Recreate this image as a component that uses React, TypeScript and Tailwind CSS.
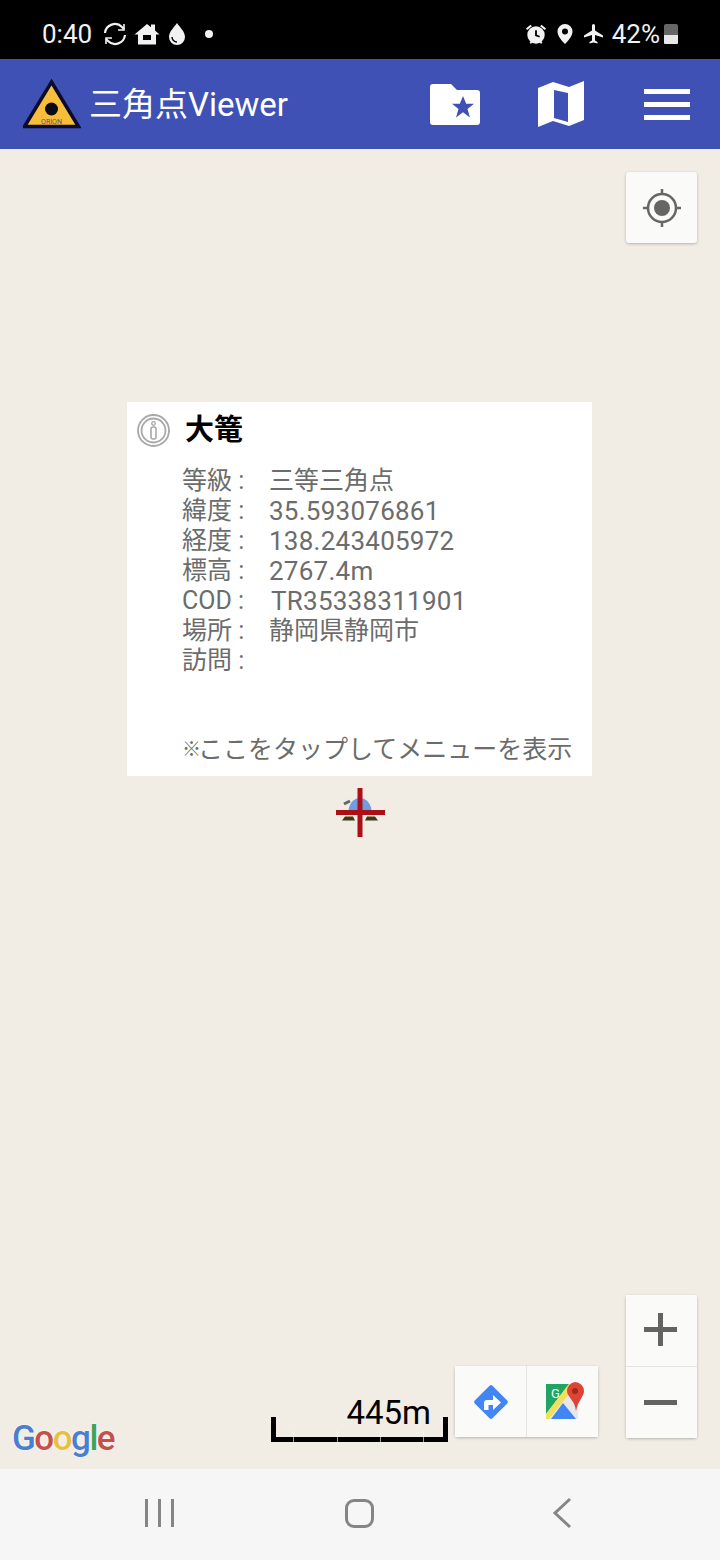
const font = { fontFamily: '"Roboto", "Noto Sans CJK JP", sans-serif' };

const rows = [
  { label: "等級", value: "三等三角点", cjk: true },
  { label: "緯度", value: "35.593076861" },
  { label: "経度", value: "138.243405972" },
  { label: "標高", value: "2767.4m" },
  { label: "COD", value: "TR35338311901", code: true },
  { label: "場所", value: "静岡県静岡市", cjk: true },
  { label: "訪問", value: "" },
];

const StatusBar = () => (
  <div className="flex h-[59px] items-center justify-between bg-black pl-[42px] pr-[42px] pt-[8px] text-[#f2f2f2]">
    <div className="flex items-center">
      <span className="text-[26px] leading-none">0:40</span>
      <svg className="ml-[11px]" width="24" height="24" viewBox="0 0 24 24" fill="none" stroke="currentColor" strokeWidth="2.2">
        <path d="M2 11a10 10 0 0 1 17-6l2 2M22 13a10 10 0 0 1-17 6l-2-2" />
        <path d="M21 2v6h-6M3 22v-6h6" strokeWidth="1.6" />
      </svg>
      <svg className="ml-[7px]" width="26" height="24" viewBox="0 0 26 24" fill="currentColor">
        <path d="M13 2l4 3.2V2.5h4v6l4.500 4H22v10H4v-10H.5zM9 13v5h8v-5z" fillRule="evenodd" />
      </svg>
      <svg className="ml-[7px]" width="20" height="24" viewBox="0 0 20 24">
        <path d="M10 1c3 4.500 8 8.500 8 14a8 8 0 0 1-16 0c0-5.500 5-9.500 8-14z" fill="currentColor" />
        <path d="M5 15a5 5 0 0 0 5 5" fill="none" stroke="#000" strokeWidth="1.500" />
      </svg>
      <span className="ml-[18px] h-[8px] w-[8px] rounded-full bg-[#f2f2f2]" />
    </div>
    <div className="flex items-center">
      <svg width="22" height="22" viewBox="0 0 24 24" fill="currentColor">
        <circle cx="12" cy="13" r="9.500" />
        <path d="M12 8v5.500l4 1.500" fill="none" stroke="#000" strokeWidth="2" />
        <path d="M1 6l5-4 1.500 1.500-5 4zM23 6l-5-4-1.500 1.500 5 4zM5 21l2-2 1.500 1.500-2 2.500zM19 21l-2-2-1.500 1.500 2 2.500z" />
      </svg>
      <svg className="ml-[8px]" width="20" height="22" viewBox="0 0 20 22">
        <path fillRule="evenodd" fill="currentColor" d="M10 1a7.500 7.500 0 0 1 7.500 7.500C17.500 13 13 18 10 21 7 18 2.500 13 2.500 8.500A7.500 7.500 0 0 1 10 1zm0 4.500a3 3 0 1 0 0 6 3 3 0 0 0 0-6z" />
      </svg>
      <svg className="ml-[7px]" width="24" height="24" viewBox="0 0 24 24" fill="currentColor">
        <path d="M21 15.500v-2l-8-5V3.500a1.500 1.500 0 0 0-3 0V8.500l-8 5v2l8-2.500v5.500l-2.500 1.500v1.500l4-1 4 1V20l-2.500-1.500V13z" />
      </svg>
      <span className="ml-[6px] text-[26px] leading-none">42%</span>
      <div className="ml-[4px] flex h-[20px] w-[14px] flex-col overflow-hidden rounded-t-[2px] rounded-b-[1px]">
        <div className="h-[11px] bg-[#666]" />
        <div className="flex-1 bg-[#e8e8e8]" />
      </div>
    </div>
  </div>
);

const Header = () => (
  <div className="flex h-[90px] items-center bg-[#3f51b5] pl-[23px] shadow-[0_1px_2px_rgba(0,0,0,0.3)]">
    <svg width="58" height="54" viewBox="0 0 58 54">
      <path d="M28.500 5 L55.500 49.500 H1.500 Z" fill="#f8bd3a" stroke="#0b0b2a" strokeWidth="3.500" strokeLinejoin="miter" />
      <circle cx="28.500" cy="32" r="6.500" fill="#0b0b16" />
      <text x="28.500" y="47" textAnchor="middle" fontSize="7" fill="#555" style={font}>ORION</text>
    </svg>
    <span className="ml-[8px] text-[33px] leading-none text-white">三角点Viewer</span>
    <div className="ml-auto flex items-center">
      <svg className="mr-[58px]" width="50" height="41" viewBox="0 0 50 41">
        <path fill="#fff" d="M3 0h18l6 6h20a3 3 0 0 1 3 3v29a3 3 0 0 1-3 3H3a3 3 0 0 1-3-3V3a3 3 0 0 1 3-3z" />
        <path fill="#3f51b5" d="M33 12l3.200 7.800H44l-6.500 5.200 2.500 8.500-7-5.200-7 5.200 2.500-8.500-6.500-5.200h7.800z" />
      </svg>
      <svg className="mr-[60px]" width="46" height="46" viewBox="0 0 46 46">
        <path fill="#fff" fillRule="evenodd" d="M0 7 15 1 31 6 46 0V39L31 45 15 40 0 46ZM16 9V37L30 41V12Z" />
      </svg>
      <div className="mr-[30px] flex w-[46px] flex-col gap-[8px]">
        <div className="h-[5px] bg-white" />
        <div className="h-[5px] bg-white" />
        <div className="h-[5px] bg-white" />
      </div>
    </div>
  </div>
);

const InfoCard = () => (
  <div className="absolute left-[127px] top-[253px] flex h-[374px] w-[465px] flex-col bg-white pl-[10px]">
    <div className="flex h-[56px] items-center">
      <svg width="33" height="33" viewBox="0 0 33 33" fill="none" stroke="#a8a8a8">
        <circle cx="16.500" cy="16.500" r="15.500" strokeWidth="1.800" />
        <circle cx="16.500" cy="16.500" r="12" strokeWidth="1.800" />
        <rect x="14" y="13" width="5" height="12" rx="2" strokeWidth="1.600" />
        <circle cx="16.500" cy="9.500" r="1.800" strokeWidth="1.300" />
      </svg>
      <span className="ml-[15px] text-[29px] font-bold leading-none text-black">大篭</span>
    </div>
    <div className="ml-[46px] mt-[8px] flex flex-col text-[25px] leading-[30px] text-[#6c6c6c]">
      {rows.map((row) => (
        <div key={row.label} className="flex h-[30px] -ml-px">
          <span className="w-[87px] whitespace-nowrap">{row.label} :</span>
          <span className={row.cjk ? "" : row.code ? "ml-[2px] text-[26px] tracking-[0.25px]" : "text-[26px] tracking-[0.25px]"}>{row.value}</span>
        </div>
      ))}
    </div>
    <div className="ml-[45px] mt-[59px] flex items-center whitespace-nowrap text-[25px] leading-[30px] text-[#6c6c6c]">
      <span className="w-[16px] text-[19px]">※</span>
      <span>ここをタップしてメニューを表示</span>
    </div>
  </div>
);

const Marker = () => (
  <svg className="absolute left-[330px] top-[635px]" width="60" height="58" viewBox="0 0 60 58">
    <path d="M14 20l6-3" stroke="#666" strokeWidth="3" fill="none" />
    <path d="M18.500 28a11.500 14 0 0 1 23 0z" fill="#6f9de0" />
    <path d="M12 36.500l3-4h8l2 4zM35 36.500l2-4h8l3 4z" fill="#3a3a14" />
    <path d="M30 4v49M6 28.500h49" stroke="#ad0f18" strokeWidth="5" />
  </svg>
);

const Control = ({ className, children }: { className?: string; children: React.ReactNode }) => (
  <div className={`flex h-[71px] w-[71px] items-center justify-center bg-[#fafaf8] ${className ?? ""}`}>{children}</div>
);

const Map = () => (
  <div className="relative flex-1 bg-[#f1ede5]">
    <Control className="absolute left-[626px] top-[23px] rounded-[3px] shadow-[0_1px_3px_rgba(0,0,0,0.25)]">
      <svg width="40" height="40" viewBox="0 0 40 40" fill="none" stroke="#666" strokeWidth="2.500">
        <circle cx="20" cy="20" r="14" />
        <circle cx="20" cy="20" r="8" fill="#666" stroke="none" />
        <path d="M20 1v6M20 33v6M1 20h6M33 20h6" />
      </svg>
    </Control>

    <InfoCard />
    <Marker />

    <div className="absolute left-[626px] top-[1146px] flex flex-col gap-px rounded-[3px] bg-[#e6e4de] shadow-[0_1px_3px_rgba(0,0,0,0.25)]">
      <Control>
        <svg className="-ml-[2px] -mt-[2px]" width="33" height="33" viewBox="0 0 33 33" fill="#636363">
          <path d="M14 0h5v14h14v5H19v14h-5V19H0v-5h14z" />
        </svg>
      </Control>
      <Control>
        <div className="-ml-[2px] h-[5px] w-[33px] bg-[#636363]" />
      </Control>
    </div>

    <div className="absolute left-[455px] top-[1217px] flex gap-px rounded-[3px] bg-[#e6e4de] shadow-[0_1px_3px_rgba(0,0,0,0.25)]">
      <Control>
        <svg width="38" height="38" viewBox="0 0 38 38">
          <rect x="6.500" y="6.500" width="25" height="25" rx="2" fill="#4285f4" transform="rotate(45 19 19)" />
          <path d="M12 27v-7a3 3 0 0 1 3-3h6v-5l8 7.500-8 7.500v-5h-4.500v5z" fill="#fff" />
        </svg>
      </Control>
      <Control>
        <svg className="ml-[4px]" width="42" height="42" viewBox="0 0 42 42">
          <rect x="2" y="3" width="32" height="35" fill="#e8e8e8" />
          <path d="M2 3h23L2 33z" fill="#1fa463" />
          <path d="M2 33 25 3l4 5L5 38H2z" fill="#f1e05a" />
          <path d="M7 38 19 22l13 16z" fill="#4285f4" />
          <text x="7" y="17" fontSize="13" fill="#fff" style={font}>G</text>
          <path d="M31 1a9 9 0 0 1 9 9c0 6-6 9-8 20-1-11-9-14-9-20a9 9 0 0 1 8-9z" fill="#db4437" />
          <circle cx="31" cy="10" r="3" fill="#a52714" />
        </svg>
      </Control>
    </div>

    <div className="absolute left-[271px] top-[1268px] h-[25px] w-[177px] border-x-[5px] border-b-[5px] border-black">
      <span className="absolute -top-[24px] right-[12px] text-[33px] leading-[40px] text-black">445m</span>
      <div className="absolute -bottom-[6px] left-[17px] h-[12px] w-px bg-white/60" />
      <div className="absolute -bottom-[6px] left-[61px] h-[12px] w-px bg-white/60" />
      <div className="absolute -bottom-[6px] left-[104px] h-[12px] w-px bg-white/60" />
      <div className="absolute -bottom-[6px] left-[147px] h-[12px] w-px bg-white/60" />
    </div>

    <div className="absolute left-[12px] top-[1270px] text-[35px] font-medium leading-[40px] tracking-[-1.500px] [text-shadow:0_0_2px_#fff]">
      <span className="text-[#4a7fd0]">G</span>
      <span className="text-[#c4504a]">o</span>
      <span className="text-[#e8c13c]">o</span>
      <span className="text-[#4a7fd0]">g</span>
      <span className="text-[#3fa45b]">l</span>
      <span className="text-[#c4504a]">e</span>
    </div>
  </div>
);

const NavBar = () => (
  <div className="flex h-[91px] items-center bg-[#f6f6f6] pb-[3px]">
    <div className="ml-[145px] flex gap-[10px]">
      <div className="h-[28px] w-[3px] bg-[#858585]" />
      <div className="h-[28px] w-[3px] bg-[#858585]" />
      <div className="h-[28px] w-[3px] bg-[#858585]" />
    </div>
    <div className="ml-[171px] h-[29px] w-[29px] rounded-[9px] border-[3px] border-[#858585]" />
    <svg className="ml-[178px]" width="20" height="32" viewBox="0 0 20 32" fill="none" stroke="#858585" strokeWidth="3">
      <path d="M18 2 3 16l15 14" />
    </svg>
  </div>
);

export default function App() {
  return (
    <div className="flex h-[1560px] w-[720px] flex-col overflow-hidden" style={font}>
      <StatusBar />
      <Header />
      <Map />
      <NavBar />
    </div>
  );
}
